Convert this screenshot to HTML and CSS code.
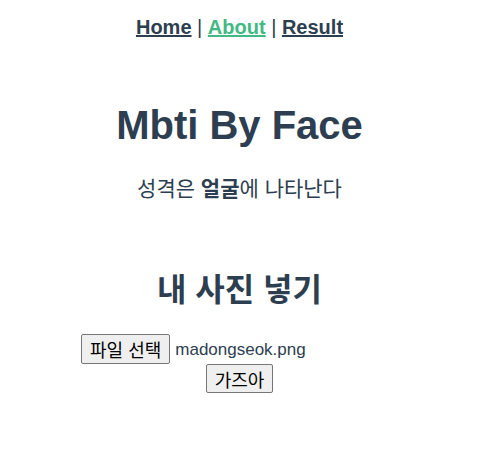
FILE: index.html
```html
<!DOCTYPE html>
<html lang="ko">
<head>
<meta charset="utf-8">
<link rel="stylesheet" href="styles.css">
</head>
<body>
<div class="app">
  <nav class="nav">
    <a href="#" class="link">Home</a> | <a href="#" class="link active">About</a> | <a href="#" class="link">Result</a>
  </nav>
  <h1 class="title">Mbti By Face</h1>
  <p class="sub">성격은 <b>얼굴</b>에 나타난다</p>
  <h2 class="head">내 사진 넣기</h2>
  <div class="form">
    <div class="filerow"><button class="btn">파일 선택</button><span class="fname">madongseok.png</span></div>
    <button class="btn go">가즈아</button>
  </div>
</div>
</body>
</html>
```
FILE: styles.css
```css
html, body { margin: 0; background: #fff; }
body { font-family: "Liberation Sans", Arial, "Noto Sans CJK KR", sans-serif; }
.app { text-align: center; color: #2c3e50; padding-right: 7px; }
.nav { padding-top: 15px; font-size: 20px; line-height: 24px; }
.link { font-weight: bold; color: #2c3e50; }
.link.active { color: #42b983; }
.title { font-size: 40px; line-height: 46px; margin: 63px 0 0; font-weight: bold; }
.sub { font-size: 21px; line-height: 28px; margin: 27px 0 0; }
.head { font-size: 32px; line-height: 38px; margin: 68px 0 0; font-weight: bold; }
.form { width: 317px; margin: 25px auto 0; display: flex; flex-direction: column; align-items: center; }
.filerow { align-self: flex-start; display: flex; align-items: center; }
.btn { font-family: "Noto Sans CJK KR", "Liberation Sans", sans-serif; font-size: 18px; line-height: 22px; color: #000; background: #efefef; border: 1px solid #767676; border-radius: 2px; padding: 0 8px; height: 30px; }
.fname { font-size: 17px; color: #2c3e50; margin-left: 5px; padding-top: 2px; }
.go { height: 29px; }
```
